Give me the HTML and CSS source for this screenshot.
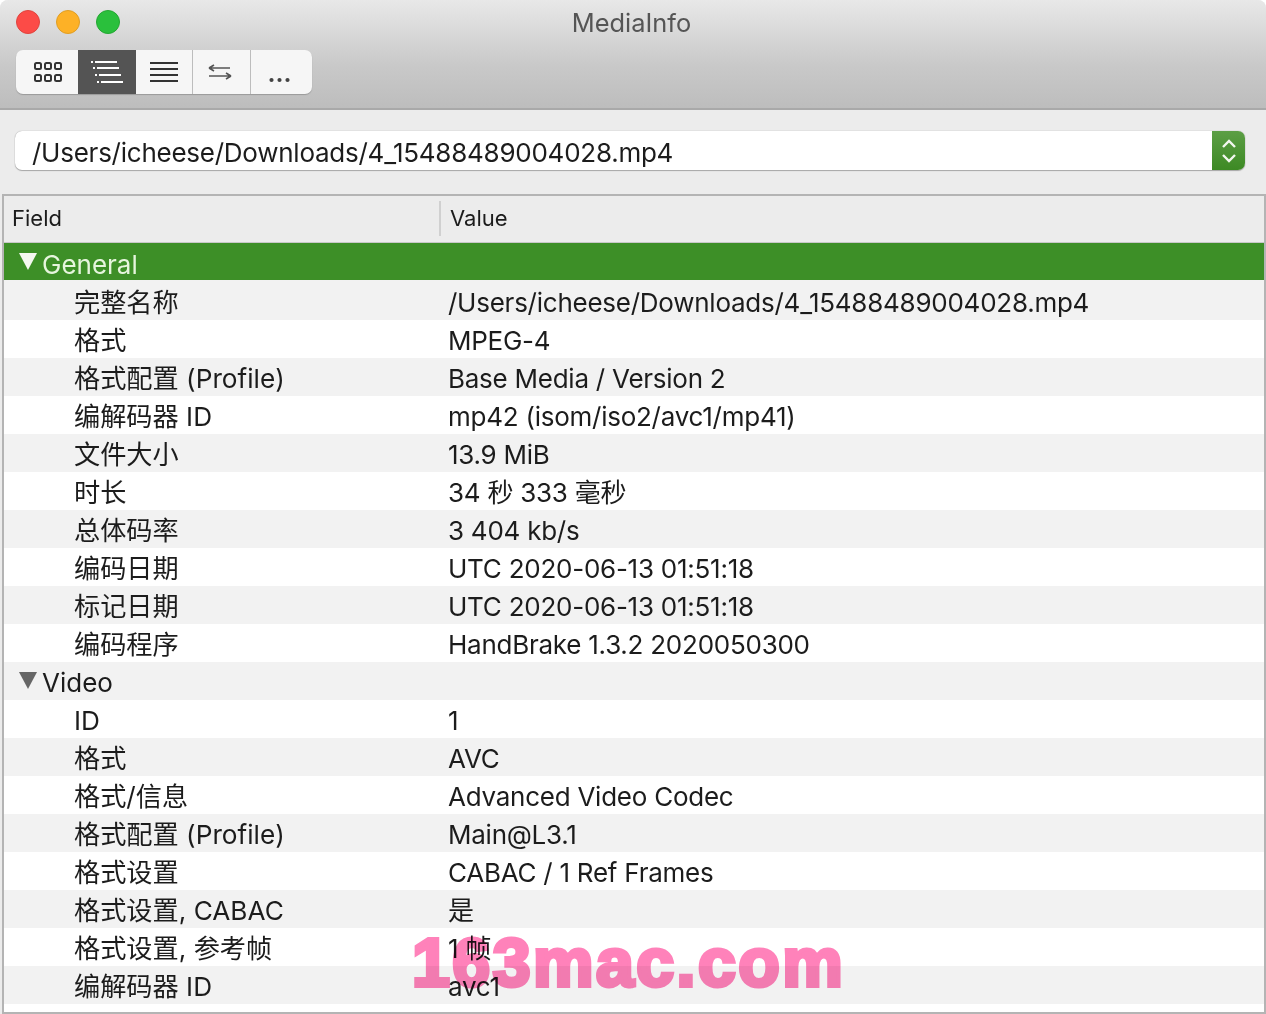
FILE: index.html
```html
<!DOCTYPE html>
<html lang="zh-CN">
<head>
    <meta charset="UTF-8">
    <title>MediaInfo</title>
    <link rel="stylesheet" href="styles.css">
</head>
<body>
    <div class="window">
        <header class="titlebar">
            <div class="title-row">
                <div class="lights">
                    <span class="light red"></span>
                    <span class="light yellow"></span>
                    <span class="light green"></span>
                </div>
                <div class="title">MediaInfo</div>
            </div>
            <div class="toolbar">
                <button class="seg seg-grid">
                    <svg width="30" height="22" viewBox="0 0 30 22" fill="none" stroke="#333" stroke-width="2">
                        <rect x="2" y="2" width="6" height="6" rx="1.5"/><rect x="12" y="2" width="6" height="6" rx="1.5"/><rect x="22" y="2" width="6" height="6" rx="1.5"/>
                        <rect x="2" y="14" width="6" height="6" rx="1.5"/><rect x="12" y="14" width="6" height="6" rx="1.5"/><rect x="22" y="14" width="6" height="6" rx="1.5"/>
                    </svg>
                </button>
                <button class="seg seg-tree active">
                    <svg width="34" height="24" viewBox="0 0 34 24" fill="none" stroke="#fff" stroke-width="2">
                        <path d="M6 2H28M8 8H30M10 15H32M12 22H34" transform="translate(-1 0)"/>
                        <path d="M1 2H3M3 8H5M5 15H7M7 22H9" stroke-width="2"/>
                    </svg>
                </button>
                <button class="seg seg-text">
                    <svg width="30" height="22" viewBox="0 0 30 22" fill="none" stroke="#333" stroke-width="2">
                        <path d="M1 2H29M1 8H29M1 14H29M1 20H29"/>
                    </svg>
                </button>
                <button class="seg seg-swap">
                    <svg width="24" height="16" viewBox="0 0 24 16" fill="none" stroke="#555" stroke-width="1.6">
                        <path d="M1 4H22M1 4L6 1M1 4L6 7"/>
                        <path d="M1 12H22M23 12L18 9M23 12L18 15"/>
                    </svg>
                </button>
                <button class="seg seg-more">...</button>
            </div>
        </header>

        <div class="path-bar">
            <div class="combo">
                <div class="combo-value">/Users/icheese/Downloads/4_15488489004028.mp4</div>
                <div class="stepper">
                    <svg width="16" height="28" viewBox="0 0 16 28" fill="none" stroke="#f2f7ee" stroke-width="2.4">
                        <path d="M2 10L8 4L14 10M2 18L8 24L14 18"/>
                    </svg>
                </div>
            </div>
        </div>

        <section class="table">
            <div class="table-head">
                <div class="head-cell head-field">Field</div>
                <div class="head-cell head-value">Value</div>
            </div>
            <div class="rows">
                <div class="group selected"><span class="tri"></span>General</div>
                <div class="row"><span>完整名称</span><span class="val">/Users/icheese/Downloads/4_15488489004028.mp4</span></div>
                <div class="row"><span>格式</span><span class="val">MPEG-4</span></div>
                <div class="row"><span>格式配置 (Profile)</span><span class="val">Base Media / Version 2</span></div>
                <div class="row"><span>编解码器 ID</span><span class="val">mp42 (isom/iso2/avc1/mp41)</span></div>
                <div class="row"><span>文件大小</span><span class="val">13.9 MiB</span></div>
                <div class="row"><span>时长</span><span class="val">34 秒 333 毫秒</span></div>
                <div class="row"><span>总体码率</span><span class="val">3 404 kb/s</span></div>
                <div class="row"><span>编码日期</span><span class="val">UTC 2020-06-13 01:51:18</span></div>
                <div class="row"><span>标记日期</span><span class="val">UTC 2020-06-13 01:51:18</span></div>
                <div class="row"><span>编码程序</span><span class="val">HandBrake 1.3.2 2020050300</span></div>
                <div class="group"><span class="tri"></span>Video</div>
                <div class="row"><span>ID</span><span class="val">1</span></div>
                <div class="row"><span>格式</span><span class="val">AVC</span></div>
                <div class="row"><span>格式/信息</span><span class="val">Advanced Video Codec</span></div>
                <div class="row"><span>格式配置 (Profile)</span><span class="val">Main@L3.1</span></div>
                <div class="row"><span>格式设置</span><span class="val">CABAC / 1 Ref Frames</span></div>
                <div class="row"><span>格式设置, CABAC</span><span class="val">是</span></div>
                <div class="row"><span>格式设置, 参考帧</span><span class="val">1 帧</span></div>
                <div class="row"><span>编解码器 ID</span><span class="val">avc1</span></div>
            </div>
        </section>

        <div class="watermark">163mac.com</div>
    </div>
</body>
</html>
```

FILE: styles.css
```css
:root {
    --ui-font: Inter, "Noto Sans CJK SC", sans-serif;
    --text-color: #1c1c1c;
    --stripe: #f2f2f2;
    --line: #b4b4b4;
    --green: #3d8f27;
}

* {
    margin: 0;
    padding: 0;
    box-sizing: border-box;
}

body {
    background: #fff;
    font-family: var(--ui-font);
    color: var(--text-color);
    overflow: hidden;
}

.window {
    position: relative;
    width: 1266px;
    height: 1014px;
    background: #ececec;
    border-radius: 8px 8px 0 0;
    overflow: hidden;
    display: flex;
    flex-direction: column;
}

/* title bar and toolbar */
.titlebar {
    height: 110px;
    padding: 0 16px;
    background: linear-gradient(#e8e8e8, #c9c9c9 60%, #bdbdbd);
    border-bottom: 2px solid #a9a9a9;
    flex: none;
}

.title-row {
    position: relative;
    height: 50px;
    display: flex;
    align-items: center;
}

.lights {
    display: flex;
    gap: 16px;
    margin-bottom: 6px;
}

.light {
    width: 24px;
    height: 24px;
    border-radius: 50%;
}

.red { background: #fc4b47; border: 1px solid #e0443e; }
.yellow { background: #fdb126; border: 1px solid #e09e23; }
.green { background: #2ac03c; border: 1px solid #24a732; }

.title {
    position: absolute;
    left: 0;
    right: 0;
    top: 7px;
    padding-right: 3px;
    text-align: center;
    font-size: 25.4px;
    line-height: 32px;
    color: #555;
}

.toolbar {
    display: flex;
    width: 296px;
    height: 44px;
    background: #f6f6f6;
    border-radius: 7px;
    box-shadow: 0 1px 1px #9a9a9a;
    overflow: hidden;
}

.seg {
    display: flex;
    align-items: center;
    justify-content: center;
    border: none;
    background: transparent;
    font-family: var(--ui-font);
}

.seg-grid { width: 62px; padding-left: 2px; }
.seg-tree { width: 58px; }
.seg-text { width: 57px; border-right: 1px solid #bdbdbd; }
.seg-swap { width: 58px; border-right: 1px solid #bdbdbd; padding-right: 4px; }
.seg-more { flex: 1; font-size: 24px; font-weight: 700; color: #444; padding: 0 4px 8px 0; align-items: flex-end; line-height: 24px; }

.seg.active {
    background: #545454;
}

/* file path combo box */
.path-bar {
    height: 84px;
    padding: 21px 21px 0 15px;
    flex: none;
}

.combo {
    display: flex;
    height: 39px;
    background: #fff;
    border-radius: 7px;
    box-shadow: 0 0 1px 0 #8c8c8c, 0 1px 1px #aaa;
    overflow: hidden;
}

.combo-value {
    flex: 1;
    padding-left: 17px;
    font-size: 26px;
    letter-spacing: -0.25px;
    line-height: 43px;
    white-space: nowrap;
}

.stepper {
    width: 33px;
    display: flex;
    align-items: center;
    justify-content: center;
    background: linear-gradient(#5c9e45, #3d8a24);
}

/* field / value table */
.table {
    flex: 1;
    min-height: 0;
    margin: 0 0 0 2px;
    border: 2px solid var(--line);
    overflow: hidden;
    background: #fff;
    display: flex;
    flex-direction: column;
}

.table-head {
    height: 47px;
    padding-bottom: 2px;
    flex: none;
    display: flex;
    align-items: center;
    background: #ececec;
    border-bottom: 1px solid #c8c8c8;
}

.head-cell {
    font-size: 22px;
    line-height: 35px;
}

.head-field {
    width: 437px;
    padding-left: 8px;
    border-right: 2px solid #d0d0d0;
}

.head-value {
    padding-left: 9px;
}

.group,
.row {
    height: 38px;
    font-size: 26.2px;
    line-height: 42px;
    white-space: nowrap;
}

.group {
    display: flex;
    padding-left: 38px;
    position: relative;
    background: var(--stripe);
    font-size: 26px;
}

.row {
    display: grid;
    grid-template-columns: 374px 1fr;
    padding-left: 70px;
}

.val {
    font-size: 26px;
    letter-spacing: -0.25px;
}

.row:nth-child(even) {
    background: var(--stripe);
}

.row:nth-child(odd) {
    background: #fff;
}

.group.selected {
    background: var(--green);
    color: #e6f5dd;
    height: 39px;
    line-height: 44px;
    border-bottom: 2px solid #f2f2f2;
}

.tri {
    position: absolute;
    left: 15px;
    top: 10px;
    border-left: 9px solid transparent;
    border-right: 9px solid transparent;
    border-top: 17px solid #666;
}

.selected .tri {
    border-top-color: #f4f8f0;
}

.watermark {
    position: absolute;
    left: 412px;
    top: 924px;
    font-family: "Liberation Sans", sans-serif;
    font-weight: 700;
    font-size: 68px;
    letter-spacing: 2.5px;
    line-height: 76px;
    color: #ff82ba;
    -webkit-text-stroke: 4px #ff82ba;
    mix-blend-mode: multiply;
    white-space: nowrap;
}
```
